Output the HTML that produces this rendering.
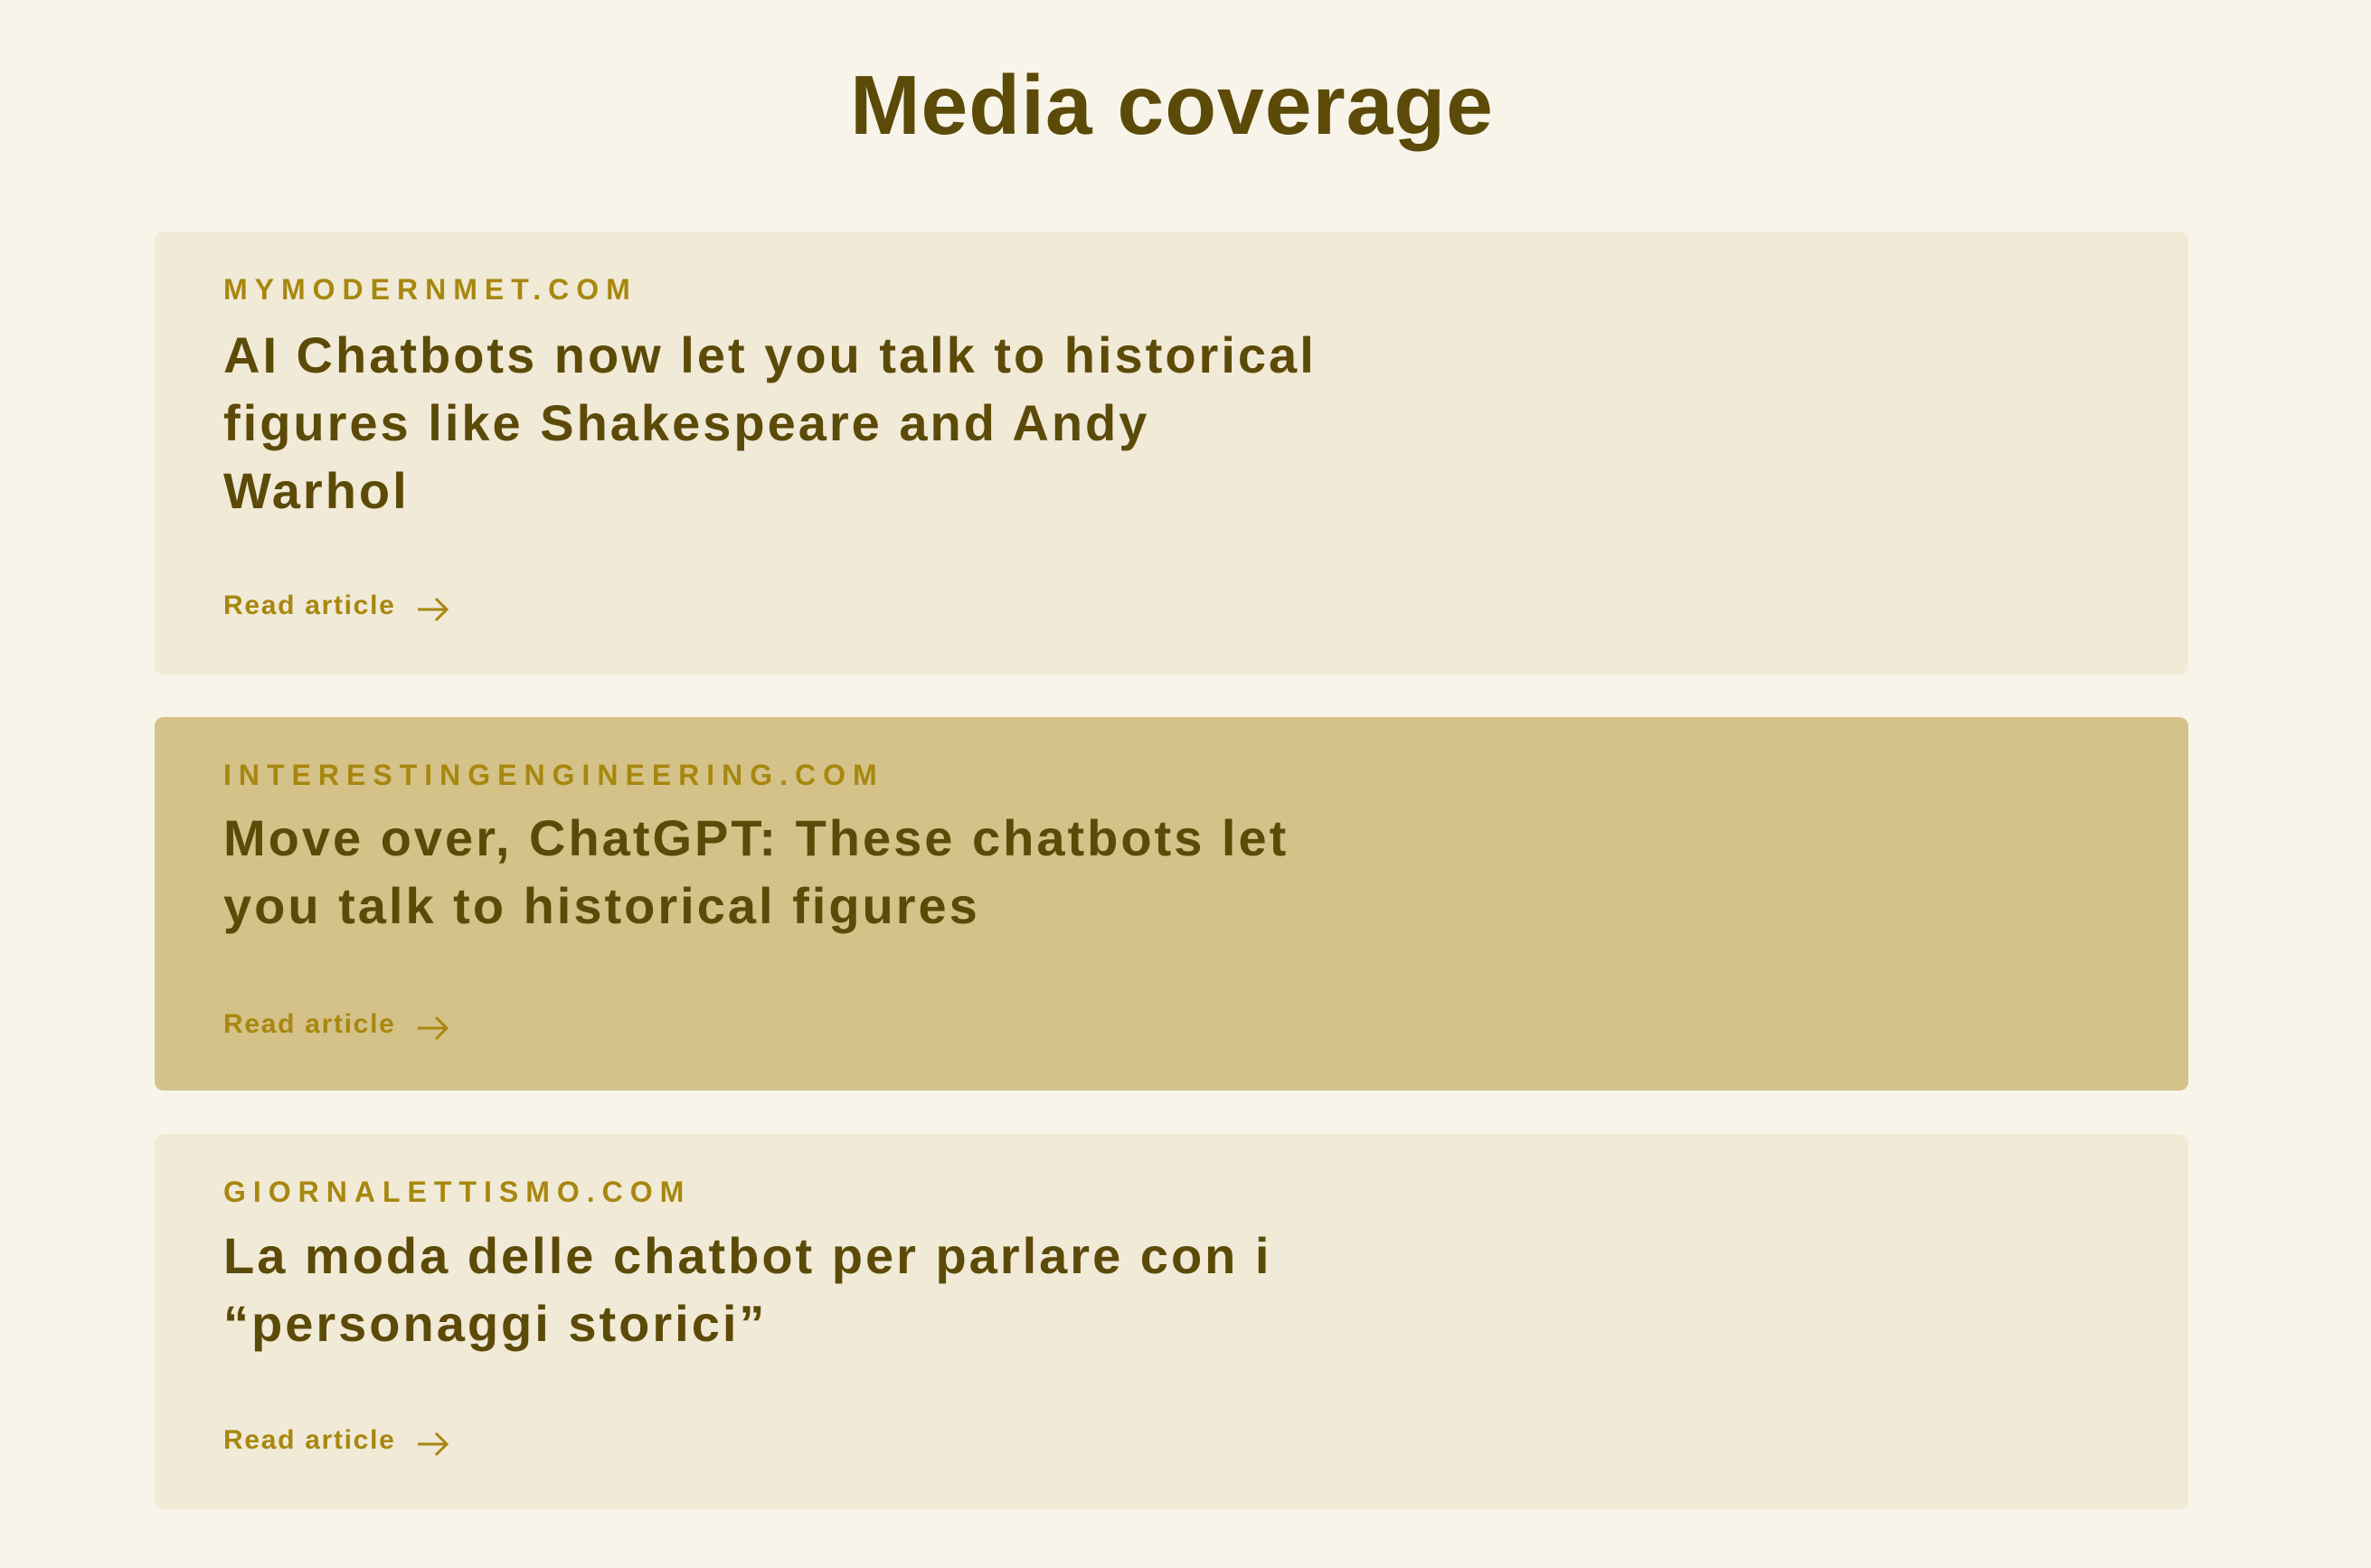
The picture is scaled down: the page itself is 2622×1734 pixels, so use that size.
<!DOCTYPE html>
<html><head><meta charset="utf-8"><style>
body{margin:0;width:2622px;height:1734px;background:#f8f4e9;font-family:"Liberation Sans",sans-serif;position:relative;overflow:hidden}
h1{position:absolute;top:70px;left:0;width:2592px;text-align:center;margin:0;font-size:93px;line-height:1;color:#5c4a08;font-weight:bold;letter-spacing:1px}
.card{position:absolute;left:171px;width:2249px;background:#f1ead7;border-radius:10px}
.card.hl{background:#d4c289}
.lab{position:absolute;left:76px;top:48px;font-size:32px;line-height:1;letter-spacing:8px;color:#a8870f;font-weight:bold;white-space:nowrap}
.hd{position:absolute;left:76px;font-size:56px;line-height:75px;color:#5c4a08;font-weight:bold;letter-spacing:3px;white-space:nowrap}
.rd{position:absolute;left:76px;font-size:30px;line-height:1;color:#a8870f;font-weight:bold;letter-spacing:1.7px;white-space:nowrap}
.rd svg{position:absolute;left:212px;top:2px}
</style></head><body>
<h1>Media coverage</h1>
<div class="card" style="top:256px;height:490px">
<div class="lab">MYMODERNMET.COM</div>
<div class="hd" style="top:99px">AI Chatbots now let you talk to historical<br>figures like Shakespeare and Andy<br>Warhol</div>
<div class="rd" style="top:399px">Read article<svg width="40" height="32" viewBox="0 0 40 32"><path d="M3 17H35M23 5L35 17L23 29" fill="none" stroke="#a8870f" stroke-width="3"/></svg></div>
</div>
<div class="card hl" style="top:793px;height:413px">
<div class="lab">INTERESTINGENGINEERING.COM</div>
<div class="hd" style="top:96px">Move over, ChatGPT: These chatbots let<br>you talk to historical figures</div>
<div class="rd" style="top:325px">Read article<svg width="40" height="32" viewBox="0 0 40 32"><path d="M3 17H35M23 5L35 17L23 29" fill="none" stroke="#a8870f" stroke-width="3"/></svg></div>
</div>
<div class="card" style="top:1254px;height:415px">
<div class="lab">GIORNALETTISMO.COM</div>
<div class="hd" style="top:97px">La moda delle chatbot per parlare con i<br>“personaggi storici”</div>
<div class="rd" style="top:324px">Read article<svg width="40" height="32" viewBox="0 0 40 32"><path d="M3 17H35M23 5L35 17L23 29" fill="none" stroke="#a8870f" stroke-width="3"/></svg></div>
</div>
</body></html>
